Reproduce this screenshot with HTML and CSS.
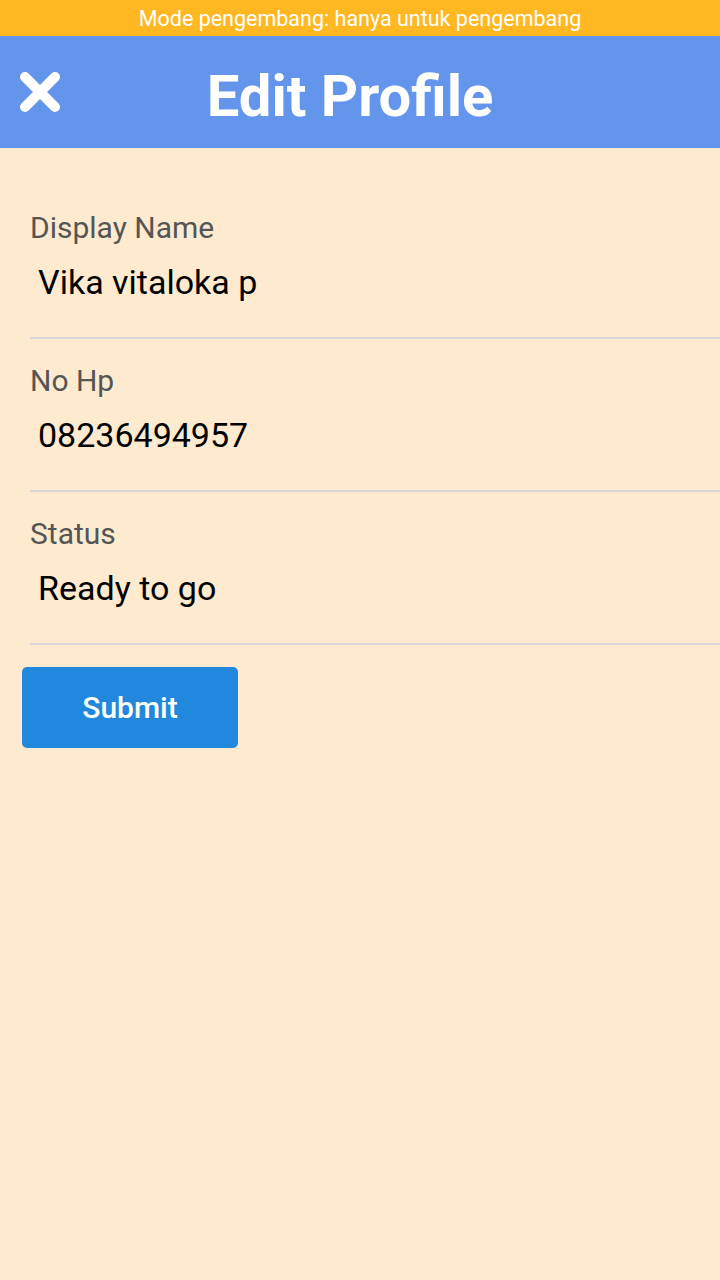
FILE: index.html
```html
<!DOCTYPE html>
<html lang="id">
<head>
<meta charset="utf-8">
<title>Edit Profile</title>
<link rel="stylesheet" href="styles.css">
</head>
<body>
<div class="devbar">Mode pengembang: hanya untuk pengembang</div>
<header class="header">
  <button class="close" aria-label="Close">
    <svg width="42" height="42" viewBox="0 0 42 42"><path d="M6 6 L36 36 M36 6 L6 36" stroke="#fff" stroke-width="10" stroke-linecap="round" fill="none"/></svg>
  </button>
  <h1 class="title">Edit Profile</h1>
</header>
<main class="form">
  <div class="field">
    <div class="label">Display Name</div>
    <div class="value">Vika vitaloka p</div>
  </div>
  <div class="field">
    <div class="label">No Hp</div>
    <div class="value">08236494957</div>
  </div>
  <div class="field">
    <div class="label">Status</div>
    <div class="value">Ready to go</div>
  </div>
  <button class="submit">Submit</button>
</main>
</body>
</html>
```
FILE: styles.css
```css
html, body {
  margin: 0;
  padding: 0;
  height: 100%;
}
body {
  background: #feebcf;
  font-family: Roboto, "Noto Sans", sans-serif;
}
.devbar {
  height: 36px;
  background: #ffb822;
  color: #fff;
  font-size: 21.5px;
  line-height: 38px;
  text-align: center;
}
.header {
  height: 112px;
  background: #6495ed;
  display: flex;
  align-items: center;
  position: relative;
}
.close {
  position: absolute;
  left: 19px;
  top: 35px;
  background: none;
  border: 0;
  padding: 0;
  width: 42px;
  height: 42px;
}
.close svg { display: block; }
.title {
  margin: 0;
  width: 100%;
  text-align: center;
  color: #fff;
  font-size: 58px;
  font-weight: 700;
  padding: 8px 20px 0 0;
  line-height: 104px;
}
.form {
  padding: 38px 0 0 30px;
}
.field {
  border-bottom: 2px solid #d6d6dc;
  height: 153px;
  box-sizing: border-box;
}
.label {
  color: #555;
  font-size: 30px;
  line-height: 34px;
  padding-top: 25px;
}
.value {
  color: #000;
  font-size: 34px;
  line-height: 40px;
  padding: 17px 0 0 8px;
}
.submit {
  margin: 22px 0 0 -8px;
  width: 216px;
  height: 81px;
  background: #2288dd;
  border: 0;
  border-radius: 5px;
  color: #fff;
  font-family: Roboto, sans-serif;
  font-size: 30px;
  font-weight: 500;
}
```
